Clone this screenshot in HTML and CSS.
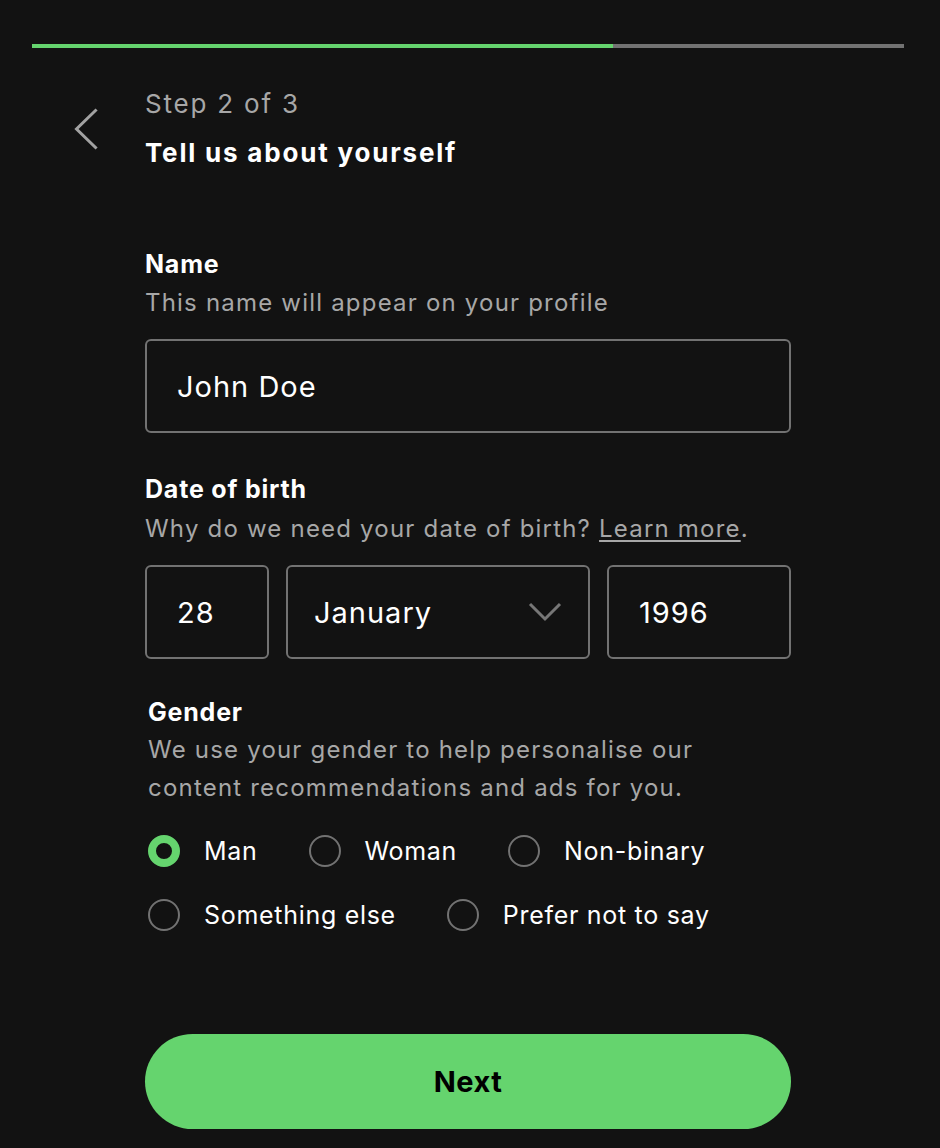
FILE: index.html
```html
<!DOCTYPE html>
<html lang="en">
<head>
<meta charset="utf-8">
<title>Sign up - Step 2 of 3</title>
<link rel="stylesheet" href="styles.css">
</head>
<body>
<div class="progress"><div class="progress-fill" style="width: 66.63%"></div></div>

<header class="header">
  <button class="back" aria-label="Go back">
    <svg width="24" height="42" viewBox="0 0 24 42" fill="none" stroke="currentColor" stroke-width="3" stroke-linecap="square"><polyline points="21.5,2.5 2.5,21 21.5,39.5"/></svg>
  </button>
  <div class="header-text">
    <div class="step">Step 2 of 3</div>
    <h1 class="title">Tell us about yourself</h1>
  </div>
</header>

<form class="form">
  <section class="field">
    <label class="label" for="name">Name</label>
    <p class="hint">This name will appear on your profile</p>
    <input class="input" id="name" type="text" value="John Doe">
  </section>

  <section class="field field-dob">
    <div class="label">Date of birth</div>
    <p class="hint hint-dob">Why do we need your date of birth? <a class="link" href="#">Learn more</a>.</p>
    <div class="dob-row">
      <input class="input input-day" type="text" value="28" aria-label="Day">
      <div class="input input-month" role="button" aria-label="Month">
        <span>January</span>
        <svg width="34" height="20" viewBox="0 0 34 20" fill="none" stroke="currentColor" stroke-width="3"><polyline points="2,2 17,17 32,2"/></svg>
      </div>
      <input class="input input-year" type="text" value="1996" aria-label="Year">
    </div>
  </section>

  <section class="field field-gender">
    <div class="label">Gender</div>
    <p class="hint hint-gender">We use your gender to help personalise our content recommendations and ads for you.</p>
    <div class="radios">
      <label class="radio"><input type="radio" name="gender" checked><span>Man</span></label>
      <label class="radio"><input type="radio" name="gender"><span>Woman</span></label>
      <label class="radio"><input type="radio" name="gender"><span>Non-binary</span></label>
      <label class="radio"><input type="radio" name="gender"><span>Something else</span></label>
      <label class="radio"><input type="radio" name="gender"><span>Prefer not to say</span></label>
    </div>
  </section>

  <button class="next" type="button">Next</button>
</form>
</body>
</html>
```

FILE: styles.css
```css
* { box-sizing: border-box; }

html, body {
  margin: 0;
  padding: 0;
  background: #121212;
}

body {
  font-family: "Inter", "Noto Sans", sans-serif;
  color: #ffffff;
  width: 940px;
  min-height: 1148px;
  overflow: hidden;
}

.progress {
  margin: 44px 36px 0 32px;
  height: 4px;
  background: #727272;
}

.progress-fill {
  height: 100%;
  background: #65d46e;
}

.header {
  display: flex;
  align-items: center;
  margin-top: 40px;
}

.back {
  margin: 0 47px 0 74px;
  padding: 0;
  width: 24px;
  height: 42px;
  border: 0;
  background: none;
  color: #a2a2a2;
  display: flex;
}

.step {
  font-size: 26px;
  line-height: 32px;
  letter-spacing: 1.8px;
  color: #a7a7a7;
}

.title {
  margin: 17px 0 0;
  font-size: 26px;
  line-height: 32px;
  letter-spacing: 1.8px;
  font-weight: 700;
}

.form {
  margin-left: 145px;
  width: 646px;
  display: flex;
  flex-direction: column;
}

.field { margin-top: 79px; }
.field-dob { margin-top: 40px; }
.field-gender { margin-top: 37px; padding-left: 3px; }

.label {
  display: block;
  font-size: 25px;
  line-height: 32px;
  letter-spacing: 0.8px;
  font-weight: 700;
}

.hint {
  margin: 4px 0 0;
  font-size: 24px;
  line-height: 38px;
  letter-spacing: 1.2px;
  color: #a7a7a7;
}

.hint-dob { margin-top: 5px; }
.hint-gender { margin-top: 3px; max-width: 590px; }

.link {
  color: #a7a7a7;
  text-decoration: underline;
  text-underline-offset: 3px;
  text-decoration-thickness: 2px;
}

.input {
  display: flex;
  align-items: center;
  width: 100%;
  height: 94px;
  margin-top: 17px;
  padding: 0 30px;
  border: 2px solid #727272;
  border-radius: 6px;
  background: #121212;
  color: #ffffff;
  font-family: inherit;
  font-size: 29px;
  letter-spacing: 1px;
  outline: none;
}

.dob-row {
  display: flex;
  gap: 17px;
  margin-top: 17px;
}

.dob-row .input { margin-top: 0; }

.input-day { width: 124px; flex: none; }
.input-month {
  width: 304px;
  flex: none;
  justify-content: space-between;
  padding: 0 26px 0 26px;
}
.input-month svg { color: #777777; }
.input-year { flex: 1; width: auto; min-width: 0; }

.radios {
  display: flex;
  flex-wrap: wrap;
  column-gap: 51px;
  row-gap: 32px;
  margin-top: 28px;
}

.radio {
  display: flex;
  align-items: center;
  gap: 24px;
  font-size: 25px;
  line-height: 32px;
  letter-spacing: 0.7px;
}

.radio input {
  appearance: none;
  -webkit-appearance: none;
  margin: 0;
  width: 32px;
  height: 32px;
  flex: none;
  border: 2px solid #727272;
  border-radius: 50%;
  background: #121212;
}

.radio input:checked {
  border: 8px solid #65d46e;
}

.next {
  margin-top: 103px;
  height: 95px;
  border: 0;
  border-radius: 48px;
  background: #65d46e;
  color: #000000;
  font-family: inherit;
  font-size: 29px;
  letter-spacing: 0.5px;
  font-weight: 700;
}
```
